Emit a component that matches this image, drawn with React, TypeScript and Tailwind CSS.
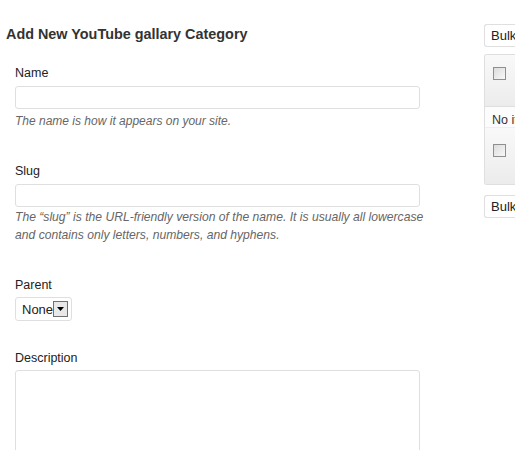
import React from 'react';

const Field: React.FC<{ label: string; children: React.ReactNode }> = ({ label, children }) => (
  <div className="pl-[9px]">
    <label className="block text-[12.5px] leading-[16px] text-[#222]">{label}</label>
    {children}
  </div>
);

const Check: React.FC = () => (
  <span className="block w-[13px] h-[13px] border border-[#8f8f8f] bg-gradient-to-br from-[#dcdcdc] to-[#f8f8f8]" />
);

const App: React.FC = () => {
  return (
    <div className="w-[515px] h-[450px] overflow-hidden bg-white flex font-['Liberation_Sans',Arial,sans-serif]">
      <div className="w-[478px] shrink-0 pl-[6px] pt-[26px]">
        <h3 className="text-[14.4px] font-bold leading-[16px] text-[#333]">Add New YouTube gallary Category</h3>

        <div className="mt-[23px]">
          <Field label="Name">
            <div className="mt-[5px] w-[405px] h-[23px] border border-[#dfdfdf] rounded-[3px] bg-white" />
            <p className="mt-[3px] text-[12px] italic leading-[18px] text-[#666]">The name is how it appears on your site.</p>
          </Field>
        </div>

        <div className="mt-[33px]">
          <Field label="Slug">
            <div className="mt-[5px] w-[405px] h-[23px] border border-[#dfdfdf] rounded-[3px] bg-white" />
            <p className="mt-[1px] w-[426px] text-[12.15px] italic leading-[18px] text-[#666]">
              The “slug” is the URL-friendly version of the name. It is usually all lowercase and contains only letters, numbers, and hyphens.
            </p>
          </Field>
        </div>

        <div className="mt-[33px]">
          <Field label="Parent">
            <div className="mt-[4px] w-[57px] h-[24px] border border-[#dfdfdf] rounded-[3px] bg-white flex items-center pl-[6px]">
              <span className="text-[13px] text-[#222] leading-none">None</span>
              <span className="w-[15px] h-[16px] border border-[#707070] bg-[#e8e8e8] flex items-center justify-center">
                <svg width="7" height="4" viewBox="0 0 7 4"><path d="M0 0h7L3.5 4z" fill="#000" /></svg>
              </span>
            </div>
          </Field>
        </div>

        <div className="mt-[29px]">
          <Field label="Description">
            <div className="mt-[4px] w-[405px] h-[100px] border border-[#dfdfdf] rounded-[3px] bg-white" />
          </Field>
        </div>
      </div>

      <div className="flex-1 pt-[24px] pl-[6px]">
        <div className="h-[23px] border border-[#dfdfdf] border-r-0 rounded-l-[3px] bg-white flex items-center pl-[6px]">
          <span className="text-[13px] text-[#222] whitespace-nowrap">Bulk Actions</span>
        </div>
        <div className="mt-[7px] border border-[#dfdfdf] border-r-0 rounded-l-[3px] overflow-hidden">
          <div className="h-[52px] bg-gradient-to-b from-[#f9f9f9] to-[#ececec] pl-[8px] pt-[12px] border-b border-[#dfdfdf]">
            <Check />
          </div>
          <div className="h-[21px] bg-[#fcfcfc] pt-[5px] pl-[7px] border-b border-[#efefef]">
            <span className="block text-[12.5px] leading-[16px] text-[#333] whitespace-nowrap">No items found.</span>
          </div>
          <div className="h-[56px] bg-gradient-to-b from-[#f9f9f9] to-[#ececec] pl-[8px] pt-[16px]">
            <Check />
          </div>
        </div>
        <div className="mt-[10px] h-[23px] border border-[#dfdfdf] border-r-0 rounded-l-[3px] bg-white flex items-center pl-[6px]">
          <span className="text-[13px] text-[#222] whitespace-nowrap">Bulk Actions</span>
        </div>
      </div>
    </div>
  );
};

export default App;
